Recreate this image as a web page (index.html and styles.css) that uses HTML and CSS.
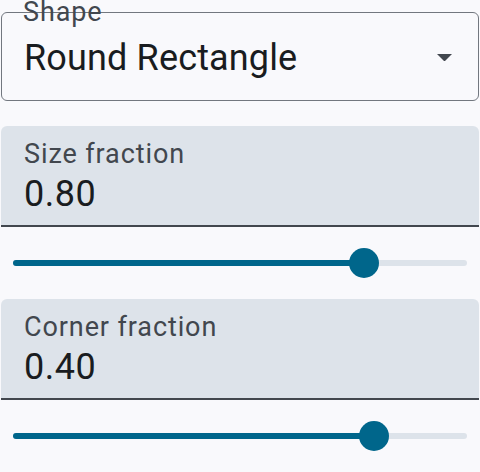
FILE: index.html
```html
<!DOCTYPE html>
<html>
<head>
<meta charset="utf-8">
<link rel="stylesheet" href="styles.css">
</head>
<body>
<div class="page">
  <div class="outlined">
    <span class="float-label">Shape</span>
    <span class="select-text">Round Rectangle</span>
    <svg class="arrow" width="15" height="8" viewBox="0 0 10 5"><path d="M0 0L5 5L10 0Z"/></svg>
  </div>
  <div class="filled">
    <div class="label">Size fraction</div>
    <div class="value">0.80</div>
  </div>
  <div class="slider">
    <div class="track">
      <div class="active" style="width:77.4%"></div>
      <div class="thumb" style="left:77.4%"></div>
    </div>
  </div>
  <div class="filled">
    <div class="label">Corner fraction</div>
    <div class="value">0.40</div>
  </div>
  <div class="slider">
    <div class="track">
      <div class="active" style="width:79.6%"></div>
      <div class="thumb" style="left:79.6%"></div>
    </div>
  </div>
</div>
</body>
</html>
```
FILE: styles.css
```css
html, body {
  margin: 0;
  padding: 0;
  background: #f9f9fc;
  font-family: Roboto, "Noto Sans", sans-serif;
}
.page {
  display: flex;
  flex-direction: column;
  padding: 12px 1px 0;
}
.outlined {
  position: relative;
  box-sizing: border-box;
  height: 89px;
  border: 1px solid #72777f;
  border-radius: 6px;
  display: flex;
  align-items: center;
  justify-content: space-between;
  padding: 2px 26px 0 22px;
  margin-bottom: 25px;
}
.float-label {
  position: absolute;
  left: 21px;
  top: -14px;
  font-size: 27px;
  line-height: 27px;
  letter-spacing: 0.9px;
  color: #42474e;
}
.select-text {
  font-size: 36px;
  line-height: 36px;
  letter-spacing: 0.15px;
  color: #191c20;
}
.arrow {
  width: 15px;
  height: 7.5px;
  fill: #42474e;
}
.filled {
  box-sizing: border-box;
  height: 101px;
  background: #dde3ea;
  border-radius: 6px 6px 0 0;
  border-bottom: 2px solid #42474e;
  padding: 15px 23px 0;
}
.label {
  font-size: 27px;
  line-height: 27px;
  letter-spacing: 0.9px;
  color: #42474e;
}
.value {
  margin-top: 8px;
  font-size: 36px;
  line-height: 36px;
  letter-spacing: 0.5px;
  color: #191c20;
}
.slider {
  height: 72px;
  padding: 0 12px;
  display: flex;
  align-items: center;
}
.track {
  position: relative;
  flex: 1;
  height: 6px;
  border-radius: 3px;
  background: #dde3ea;
}
.active {
  height: 100%;
  border-radius: 3px;
  background: #00668b;
}
.thumb {
  position: absolute;
  top: 50%;
  width: 30px;
  height: 30px;
  border-radius: 50%;
  background: #00668b;
  transform: translate(-50%, -50%);
}
```
